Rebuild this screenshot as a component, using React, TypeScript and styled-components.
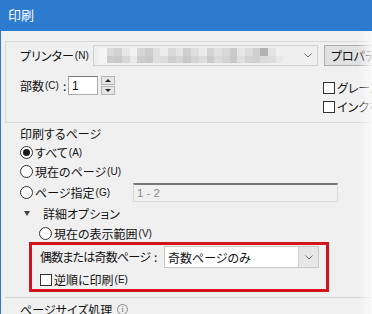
import React from "react";
import styled, { createGlobalStyle } from "styled-components";

const Global = createGlobalStyle`
  html, body { margin: 0; padding: 0; background: #f0f0f0; overflow: hidden; }
  * { box-sizing: border-box; }
`;

const FONT = `"Noto Sans CJK JP", "Noto Sans", sans-serif`;

const Window = styled.div`
  width: 372px;
  height: 314px;
  display: flex;
  flex-direction: column;
  overflow: hidden;
  font-family: ${FONT};
  font-feature-settings: "palt";
  font-size: 12px;
  color: #111;
  position: relative;
`;

const TitleBar = styled.div`
  height: 31px;
  flex: none;
  background: #2c7bcf;
  color: #fff;
  font-size: 13px;
  display: flex;
  align-items: center;
  padding-left: 8px;
  padding-bottom: 2px;
`;

const Body = styled.div`
  flex: 1;
  background: #f0f0f0;
  border-left: 1px solid #2c7bcf;
  display: flex;
  flex-direction: column;
  padding-top: 10px;
  min-height: 0;
`;

const Group = styled.div`
  margin-left: 4px;
  width: 400px;
  border-top: 1px solid #d9d9d9;
  border-left: 1px solid #d9d9d9;
  border-bottom: 1px solid #d9d9d9;
  height: 82px;
  padding: 3px 0 0 14px;
  display: flex;
  flex-direction: column;
  flex: none;
`;

const Row = styled.div<{ $h: number; $mt?: number; $ml?: number }>`
  display: flex;
  align-items: center;
  height: ${(p) => p.$h}px;
  margin-top: ${(p) => p.$mt ?? 0}px;
  margin-left: ${(p) => p.$ml ?? 0}px;
  flex: none;
  white-space: nowrap;
`;

const Label = styled.span<{ $w?: number; $tight?: boolean }>`
  display: inline-flex;
  align-items: center;
  width: ${(p) => (p.$w ? `${p.$w}px` : "auto")};
  flex: none;
  line-height: 1;
  letter-spacing: ${(p) => (p.$tight ? "-0.8px" : "0")};
`;

const Mn = styled.span`
  font-size: 10px;
  font-family: "Liberation Sans", sans-serif;
  margin-left: 1px;
  letter-spacing: 0;
`;

const Colon = styled.span`
  margin-left: 4px;
`;

const Combo = styled.div<{ $w: number }>`
  width: ${(p) => p.$w}px;
  height: 21px;
  border: 1px solid #cfcfcf;
  background: #efefef;
  display: flex;
  align-items: stretch;
  flex: none;
`;

const Blur = styled.div`
  flex: 1;
  display: grid;
  grid-template-columns: repeat(25, 1fr);
  grid-template-rows: 1fr 1fr;
  padding: 2px 6px 2px 5px;
`;

const Cell = styled.div<{ $c: string }>`
  background: ${(p) => p.$c};
`;

const Arrow = styled.div<{ $bg?: string }>`
  width: 20px;
  flex: none;
  display: flex;
  align-items: center;
  justify-content: center;
  background: ${(p) => p.$bg ?? "transparent"};
  border-left: 1px solid ${(p) => (p.$bg ? "#cfcfcf" : "transparent")};
  color: #777;
`;

const Chevron = () => (
  <svg width="8" height="5" viewBox="0 0 8 5">
    <path d="M0.5 0.5 L4 4 L7.5 0.5" fill="none" stroke="#6d6d6d" strokeWidth="1" />
  </svg>
);

const Button = styled.div`
  margin-left: 6px;
  height: 21px;
  width: 80px;
  flex: none;
  background: #e1e1e1;
  border: 1px solid #adadad;
  display: flex;
  align-items: center;
  padding-left: 6px;
`;

const Split = styled.div`
  display: flex;
  margin-top: 10px;
`;

const Col = styled.div<{ $ml?: number; $mt?: number }>`
  display: flex;
  flex-direction: column;
  margin-left: ${(p) => p.$ml ?? 0}px;
  margin-top: ${(p) => p.$mt ?? 0}px;
  flex: none;
`;

const NumInput = styled.div`
  width: 30px;
  height: 19px;
  background: #fff;
  border: 1px solid #a9a9a9;
  border-top-color: #7a7a7a;
  display: flex;
  align-items: center;
  padding-left: 3px;
  font-family: "Liberation Sans", sans-serif;
`;

const Spin = styled.div`
  margin-left: 3px;
  width: 14px;
  height: 19px;
  display: flex;
  flex-direction: column;
  gap: 1px;
`;

const SpinBtn = styled.div`
  flex: 1;
  background: #e6e6e6;
  border: 1px solid #b5b5b5;
  display: flex;
  align-items: center;
  justify-content: center;
`;

const Tri = styled.span<{ $up?: boolean }>`
  width: 0;
  height: 0;
  border-left: 3px solid transparent;
  border-right: 3px solid transparent;
  ${(p) =>
    p.$up ? "border-bottom: 3px solid #222;" : "border-top: 3px solid #222;"}
`;

const Box = styled.span`
  width: 12px;
  height: 12px;
  border: 1px solid #333;
  background: #fff;
  flex: none;
  margin-right: 2px;
`;

const Radio = styled.span<{ $on?: boolean }>`
  width: 13px;
  height: 13px;
  border-radius: 50%;
  border: 1px solid #333;
  background: #fff;
  flex: none;
  margin-right: 2px;
  display: flex;
  align-items: center;
  justify-content: center;
  &::after {
    content: "";
    width: 7px;
    height: 7px;
    border-radius: 50%;
    background: ${(p) => (p.$on ? "#1a1a1a" : "transparent")};
  }
`;

const Section = styled.div`
  padding-left: 19px;
  display: flex;
  flex-direction: column;
  flex: none;
`;

const RangeInput = styled.div`
  width: 205px;
  height: 19px;
  flex: none;
  border: 1px solid #dadada;
  border-top: 2px solid #777;
  background: #f0f0f0;
  color: #8a8a8a;
  display: flex;
  align-items: center;
  padding-left: 3px;
  font-family: "Liberation Sans", sans-serif;
  font-size: 11.5px;
`;

const RadioLabel = styled.span`
  display: inline-flex;
  align-items: center;
  width: 113px;
  flex: none;
`;

const Caret = styled.span`
  width: 0;
  height: 0;
  border-left: 3px solid transparent;
  border-right: 3px solid transparent;
  border-top: 5px solid #444;
  margin: 0 13px 0 4px;
`;

const Highlight = styled.div`
  margin-left: 28px;
  width: 300px;
  height: 50px;
  border: 3px solid #d3141c;
  padding: 1px 0 0 8px;
  display: flex;
  flex-direction: column;
  flex: none;
`;

const Select = styled.div`
  margin-left: 3px;
  width: 155px;
  height: 22px;
  background: #fff;
  border: 1px solid #c8c8c8;
  display: flex;
  align-items: stretch;
  flex: none;
`;

const SelectText = styled.div`
  flex: 1;
  display: flex;
  align-items: center;
  padding-left: 3px;
`;

const Separator = styled.div`
  margin: 5px 0 0 4px;
  height: 1px;
  background: #d6d6d6;
  flex: none;
`;

const Info = styled.span`
  width: 11px;
  height: 11px;
  border: 1px solid #888;
  border-radius: 50%;
  margin-left: 5px;
  font-size: 8px;
  color: #666;
  display: inline-flex;
  align-items: center;
  justify-content: center;
  font-family: "Liberation Serif", serif;
`;

const Fade = styled.div`
  position: absolute;
  top: 31px;
  right: 0;
  bottom: 0;
  width: 14px;
  background: linear-gradient(to right, rgba(248, 248, 248, 0), rgba(250, 250, 250, 0.9));
  pointer-events: none;
`;

const shades = [
  "#f4f4f4", "#dadada", "#d2d2d2", "#e6e6e6", "#f2f2f2", "#d6d6d6", "#cdcdcd", "#e0e0e0",
  "#ececec", "#d9d9d9", "#e4e4e4", "#cfcfcf", "#dedede", "#ebebeb", "#d4d4d4", "#e2e2e2",
  "#d8d8d8", "#cacaca", "#e6e6e6", "#dcdcdc", "#d0d0d0", "#b3b3b3", "#e4e4e4", "#f0f0f0", "#efefef",
  "#f3f3f3", "#cbcbcb", "#c9c9c9", "#d8d8d8", "#eaeaea", "#cccccc", "#c8c8c8", "#e0e0e0",
  "#dcdcdc", "#cecece", "#d6d6d6", "#c9c9c9", "#d5d5d5", "#dddddd", "#cbcbcb", "#dadada",
  "#d3d3d3", "#c8c8c8", "#dedede", "#d2d2d2", "#d0d0d0", "#dcdcdc", "#dedede", "#e8e8e8", "#efefef",
];

export default function App() {
  return (
    <>
      <Global />
      <Window>
        <TitleBar>印刷</TitleBar>
        <Body>
          <Group>
            <Row $h={21}>
              <Label $w={73}>
                プリンター<Mn>(N)</Mn>
                <Colon>:</Colon>
              </Label>
              <Combo $w={225}>
                <Blur>
                  {shades.map((c, i) => (
                    <Cell key={i} $c={c} />
                  ))}
                </Blur>
                <Arrow>
                  <Chevron />
                </Arrow>
              </Combo>
              <Button>プロパティ</Button>
            </Row>
            <Split>
              <Row $h={19}>
                <Label $w={48}>
                  部数<Mn>(C)</Mn>
                  <Colon>:</Colon>
                </Label>
                <NumInput>1</NumInput>
                <Spin>
                  <SpinBtn>
                    <Tri $up />
                  </SpinBtn>
                  <SpinBtn>
                    <Tri />
                  </SpinBtn>
                </Spin>
              </Row>
              <Col $ml={208} $mt={2}>
                <Row $h={19}>
                  <Box />
                  グレースケール
                </Row>
                <Row $h={19}>
                  <Box />
                  インクを節約
                </Row>
              </Col>
            </Split>
          </Group>
          <Section>
            <Row $h={20}>印刷するページ</Row>
            <Row $h={19}>
              <Radio $on />
              すべて<Mn>(A)</Mn>
            </Row>
            <Row $h={19}>
              <Radio />
              現在のページ<Mn>(U)</Mn>
            </Row>
            <Row $h={21} $mt={1}>
              <RadioLabel>
                <Radio />
                ページ指定<Mn>(G)</Mn>
              </RadioLabel>
              <RangeInput>1 - 2</RangeInput>
            </Row>
            <Row $h={20}>
              <Caret />
              詳細オプション
            </Row>
            <Row $h={17} $mt={2} $ml={19}>
              <Radio />
              現在の表示範囲<Mn>(V)</Mn>
            </Row>
          </Section>
          <Highlight>
            <Row $h={22}>
              <Label $w={121} $tight>
                偶数または奇数ページ<Colon>:</Colon>
              </Label>
              <Select>
                <SelectText>奇数ページのみ</SelectText>
                <Arrow $bg="#e6e6e6">
                  <Chevron />
                </Arrow>
              </Select>
            </Row>
            <Row $h={19} $mt={2}>
              <Box />
              逆順に印刷<Mn>(E)</Mn>
            </Row>
          </Highlight>
          <Separator />
          <Section>
            <Row $h={22}>
              ページサイズ処理<Info>i</Info>
            </Row>
          </Section>
        </Body>
        <Fade />
      </Window>
    </>
  );
}
